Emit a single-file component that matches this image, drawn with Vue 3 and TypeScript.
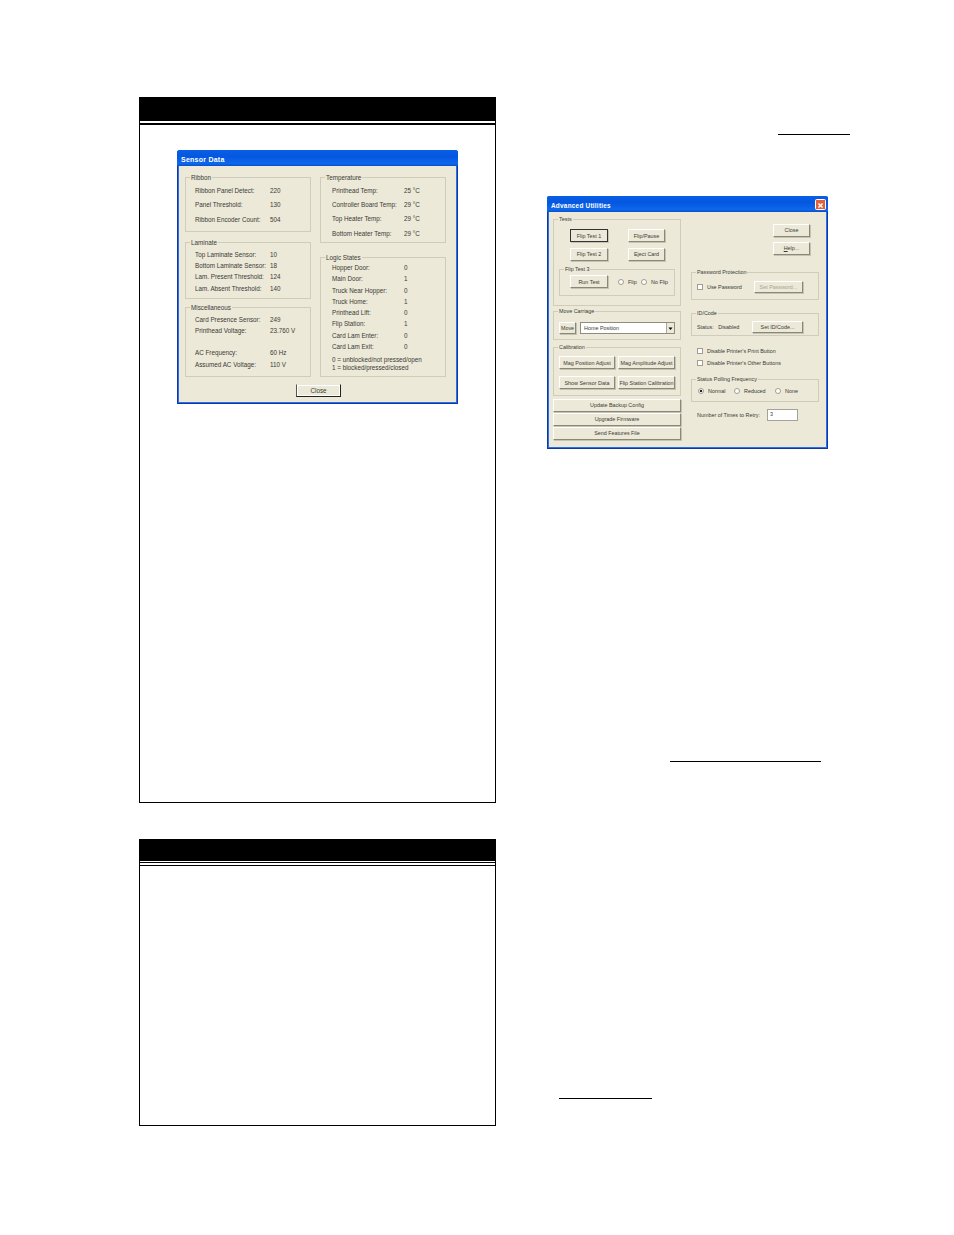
<script setup lang="ts">
interface Row { label: string; value: string }
const ribbon: Row[] = [
  { label: 'Ribbon Panel Detect:', value: '220' },
  { label: 'Panel Threshold:', value: '130' },
  { label: 'Ribbon Encoder Count:', value: '504' },
]
const laminate: Row[] = [
  { label: 'Top Laminate Sensor:', value: '10' },
  { label: 'Bottom Laminate Sensor:', value: '18' },
  { label: 'Lam. Present Threshold:', value: '124' },
  { label: 'Lam. Absent Threshold:', value: '140' },
]
const misc: Row[] = [
  { label: 'Card Presence Sensor:', value: '249' },
  { label: 'Printhead Voltage:', value: '23.760 V' },
  { label: '\u00a0', value: '' },
  { label: 'AC Frequency:', value: '60 Hz' },
  { label: 'Assumed AC Voltage:', value: '110 V' },
]
const temperature: Row[] = [
  { label: 'Printhead Temp:', value: '25 °C' },
  { label: 'Controller Board Temp:', value: '29 °C' },
  { label: 'Top Heater Temp:', value: '29 °C' },
  { label: 'Bottom Heater Temp:', value: '29 °C' },
]
const logic: Row[] = [
  { label: 'Hopper Door:', value: '0' },
  { label: 'Main Door:', value: '1' },
  { label: 'Truck Near Hopper:', value: '0' },
  { label: 'Truck Home:', value: '1' },
  { label: 'Printhead Lift:', value: '0' },
  { label: 'Flip Station:', value: '1' },
  { label: 'Card Lam Enter:', value: '0' },
  { label: 'Card Lam Exit:', value: '0' },
]
</script>

<template>
  <div class="page">
    <div class="left">
      <section class="panel panel-one">
        <div class="band"></div>
        <div class="rule"></div>
        <div class="dialog sensor">
          <div class="title">Sensor Data</div>
          <div class="sensor-body">
            <div class="col">
              <fieldset class="g g-ribbon">
                <legend>Ribbon</legend>
                <div v-for="r in ribbon" :key="r.label" class="row"><span>{{ r.label }}</span><span>{{ r.value }}</span></div>
              </fieldset>
              <fieldset class="g g-laminate">
                <legend>Laminate</legend>
                <div v-for="r in laminate" :key="r.label" class="row"><span>{{ r.label }}</span><span>{{ r.value }}</span></div>
              </fieldset>
              <fieldset class="g g-misc">
                <legend>Miscellaneous</legend>
                <div v-for="r in misc" :key="r.label" class="row"><span>{{ r.label }}</span><span>{{ r.value }}</span></div>
              </fieldset>
            </div>
            <div class="col">
              <fieldset class="g g-temp">
                <legend>Temperature</legend>
                <div v-for="r in temperature" :key="r.label" class="row"><span>{{ r.label }}</span><span>{{ r.value }}</span></div>
              </fieldset>
              <fieldset class="g g-logic">
                <legend>Logic States</legend>
                <div v-for="r in logic" :key="r.label" class="row"><span>{{ r.label }}</span><span>{{ r.value }}</span></div>
                <p class="note">0 = unblocked/not pressed/open<br />1 = blocked/pressed/closed</p>
              </fieldset>
            </div>
          </div>
          <div class="close-row"><button class="btn sensor-close">Close</button></div>
        </div>
      </section>
      <section class="panel panel-two">
        <div class="band band-two"></div>
        <div class="rule rule-two"></div>
        <div class="rule rule-two-b"></div>
      </section>
    </div>

    <div class="right">
      <div class="link-line line-a"></div>
      <div class="dialog advanced">
        <div class="title title-adv">
          <span>Advanced Utilities</span>
          <span class="x">
            <svg viewBox="0 0 11 11" width="11" height="11"><path d="M3 3l5 5M8 3l-5 5" stroke="#fff" stroke-width="1.8" fill="none" /></svg>
          </span>
        </div>
        <div class="adv-body">
          <div class="adv-col">
            <fieldset class="g a-tests">
              <legend>Tests</legend>
              <div class="btn-row"><button class="btn b38 focus">Flip Test 1</button><button class="btn b37">Flip/Pause</button></div>
              <div class="btn-row"><button class="btn b38">Flip Test 2</button><button class="btn b37">Eject Card</button></div>
              <fieldset class="g a-flip3">
                <legend>Flip Test 3</legend>
                <div class="flip-row">
                  <button class="btn b38">Run Test</button>
                  <label class="opt o-flip"><i class="radio"></i>Flip</label>
                  <label class="opt"><i class="radio"></i>No Flip</label>
                </div>
              </fieldset>
            </fieldset>
            <fieldset class="g a-move">
              <legend>Move Carriage</legend>
              <div class="move-row">
                <button class="btn b-move">Move</button>
                <div class="combo">
                  <span>Home Position</span>
                  <i class="arrow"><svg viewBox="0 0 7 7" width="7" height="7"><path d="M1.5 2.5h4L3.5 5z" fill="#000" /></svg></i>
                </div>
              </div>
            </fieldset>
            <fieldset class="g a-cal">
              <legend>Calibration</legend>
              <div class="cal-grid">
                <button class="btn">Mag Position Adjust</button>
                <button class="btn">Mag Amplitude Adjust</button>
                <button class="btn">Show Sensor Data</button>
                <button class="btn">Flip Station Calibration</button>
              </div>
            </fieldset>
            <div class="wide-stack">
              <button class="btn wide">Update Backup Config</button>
              <button class="btn wide">Upgrade Firmware</button>
              <button class="btn wide">Send Features File</button>
            </div>
          </div>
          <div class="adv-col adv-right">
            <div class="top-btns">
              <button class="btn b37">Close</button>
              <button class="btn b37"><u>H</u>elp...</button>
            </div>
            <fieldset class="g a-pass">
              <legend>Password Protection</legend>
              <div class="pass-row">
                <label class="opt"><i class="check"></i>Use Password</label>
                <button class="btn b-set disabled">Set Password...</button>
              </div>
            </fieldset>
            <fieldset class="g a-id">
              <legend>ID/Code</legend>
              <div class="id-row">
                <span>Status:&nbsp;&nbsp; Disabled</span>
                <button class="btn b-id">Set ID/Code...</button>
              </div>
            </fieldset>
            <div class="checks">
              <label class="opt"><i class="check"></i>Disable Printer's Print Button</label>
              <label class="opt"><i class="check"></i>Disable Printer's Other Buttons</label>
            </div>
            <fieldset class="g a-poll">
              <legend>Status Polling Frequency</legend>
              <div class="poll-row">
                <label class="opt p-normal"><i class="radio on"></i>Normal</label>
                <label class="opt p-reduced"><i class="radio"></i>Reduced</label>
                <label class="opt"><i class="radio"></i>None</label>
              </div>
            </fieldset>
            <div class="retry">
              <span>Number of Times to Retry:</span>
              <div class="retry-input">3</div>
            </div>
          </div>
        </div>
      </div>
      <div class="link-line line-b"></div>
      <div class="link-line line-c"></div>
    </div>
  </div>
</template>

<style>
html, body { margin: 0; background: #fff; }
</style>

<style scoped>
.page {
  width: 954px;
  height: 1235px;
  display: flex;
  overflow: hidden;
  background: #fff;
  font-family: "Liberation Sans", Arial, sans-serif;
  font-size: 6.3px;
  line-height: 8px;
  color: #3a3a36;
}
.left { margin-left: 139px; padding-top: 97px; width: 357px; }
.panel { box-sizing: border-box; border: 1px solid #000; border-top: 0; }
.panel-one { height: 706px; }
.panel-two { height: 287px; margin-top: 36px; }
.band { height: 24px; background: #000; margin: 0 -1px; }
.band-two { height: 22px; }
.rule { height: 2px; background: #000; margin: 2px -1px 0; }
.rule-two { height: 1px; margin-top: 1px; }
.rule-two-b { height: 1px; margin: 2px -1px 0; background: #000; }

.dialog {
  box-sizing: border-box;
  width: 281px;
  background: #ece9d8;
  border: 1px solid #0b38a8;
  border-top: 0;
  border-radius: 3px 3px 0 0;
  box-shadow: inset 0 0 0 1px #2f6fe4;
}
.sensor { height: 254px; margin: 25px 0 0 37px; }
.title {
  box-sizing: border-box;
  height: 16px;
  margin: 0 -1px;
  padding: 3px 3px 0 4px;
  display: flex;
  align-items: center;
  justify-content: space-between;
  color: #fff;
  font-size: 7px;
  font-weight: 700;
  letter-spacing: 0.25px;
  border-radius: 3px 3px 0 0;
  background: linear-gradient(180deg, #0a5fe6 0%, #0457e0 40%, #0d68ec 85%, #0a4fc8 100%);
}
.sensor-body { display: flex; gap: 9.5px; padding: 7px 0 0 7px; }
.col { display: flex; flex-direction: column; width: 125.5px; }

.g {
  --pad: 0px;
  box-sizing: border-box;
  margin: 0;
  padding: 0 0 0 var(--pad);
  min-width: 0;
  border: 1px solid #cfccba;
}
.g legend {
  margin-left: calc(4px - var(--pad));
  padding: 0 1px;
  line-height: 9px;
}
.row { display: grid; grid-template-columns: 75px 1fr; white-space: nowrap; }

.g-ribbon { --pad: 9px; height: 59px; padding-top: 2px; }
.g-ribbon .row { height: 14.4px; line-height: 14.4px; }
.g-laminate { --pad: 9px; height: 61px; margin-top: 6px; padding-top: 2px; }
.g-laminate .row { height: 11.2px; line-height: 11.2px; }
.g-misc { --pad: 9px; height: 74px; margin-top: 4px; padding-top: 1.5px; }
.g-misc .row { height: 11.3px; line-height: 11.3px; }
.g-temp { --pad: 11px; height: 70px; padding-top: 2px; }
.g-temp .row { grid-template-columns: 72px 1fr; height: 14.2px; line-height: 14.2px; }
.g-logic { --pad: 11px; height: 124px; margin-top: 10px; }
.g-logic .row { grid-template-columns: 72px 1fr; height: 11.3px; line-height: 11.3px; }
.note { margin: 4px 0 0; line-height: 8px; white-space: nowrap; }

.close-row { display: flex; justify-content: center; margin-top: 7px; padding-left: 2px; }
.btn {
  box-sizing: border-box;
  display: block;
  margin: 0;
  padding: 0;
  font: inherit;
  color: inherit;
  text-align: center;
  white-space: nowrap;
  background: #ece9d8;
  border: 1px solid;
  border-color: #fff #8a8878 #8a8878 #fff;
  box-shadow: 1px 1px 0 #c6c3b2;
}
.sensor-close {
  width: 45px;
  height: 13px;
  border-color: #e8e8e0 #222 #222 #555;
  box-shadow: inset 0 0 0 1px #fff;
}

.right { display: flex; flex-direction: column; padding: 134px 0 0 51px; }
.link-line { height: 1px; background: #000; }
.line-a { width: 72px; margin-left: 231px; }
.line-b { width: 151px; margin: 312px 0 0 123px; }
.line-c { width: 93px; margin: 336px 0 0 12px; }

.advanced { height: 253px; margin-top: 61px; border-radius: 2px 2px 0 0; font-size: 5.4px; }
.title-adv { padding-right: 2px; font-size: 6.4px; }
.x {
  flex: none;
  width: 11px;
  height: 11px;
  margin-top: -3px;
  display: flex;
  border: 0.5px solid #fff;
  border-radius: 1.5px;
  background: #e2603a;
  box-sizing: border-box;
}
.adv-body { display: flex; gap: 10px; padding: 3px 0 0 5px; }
.adv-col { display: flex; flex-direction: column; width: 128px; flex: none; }

.a-tests { --pad: 16px; height: 91px; padding-top: 5px; }
.btn-row { display: flex; gap: 20px; height: 13px; margin-bottom: 5.5px; }
.b38 { width: 38px; height: 13px; }
.b37 { width: 37px; height: 13px; }
.focus { border: 1.5px solid #333; }
.a-flip3 { --pad: 10px; width: 116px; height: 31px; margin: -1px 0 0 -11px; padding-top: 1px; }
.flip-row { display: flex; align-items: center; height: 13px; }
.opt { display: flex; align-items: center; white-space: nowrap; }
.o-flip { margin: 0 5px 0 10px; width: 18px; }
.radio, .check {
  flex: none;
  box-sizing: border-box;
  width: 6px;
  height: 6px;
  margin-right: 4px;
  background: #fff;
  border: 1px solid #a09e90;
}
.radio { border-radius: 50%; }
.radio.on { background: radial-gradient(circle, #222 0 1.3px, #fff 1.6px); }

.a-move { --pad: 5px; height: 33px; margin-top: 1px; padding-top: 6px; }
.move-row { display: flex; gap: 4px; height: 12px; }
.b-move { width: 17px; height: 12px; }
.combo {
  box-sizing: border-box;
  width: 95px;
  height: 12px;
  display: flex;
  align-items: center;
  justify-content: space-between;
  padding: 0 0 0 3px;
  background: #fff;
  border: 1px solid #8e8c7e;
}
.arrow {
  display: flex;
  width: 8px;
  height: 10px;
  align-items: center;
  justify-content: center;
  background: #ece9d8;
  border-left: 1px solid #aca899;
  box-sizing: border-box;
}
.a-cal { --pad: 5px; height: 53px; margin-top: 3px; padding-top: 4px; }
.cal-grid { display: grid; grid-template-columns: 56px 57px; gap: 7px 3px; grid-auto-rows: 13px; }
.wide-stack { display: flex; flex-direction: column; gap: 1.5px; margin-top: 3px; }
.wide { width: 128px; height: 12.5px; }

.adv-right { padding-top: 9px; }
.top-btns { display: flex; flex-direction: column; gap: 5.5px; align-items: flex-end; padding-right: 9px; }
.top-btns .btn { height: 12.5px; }
.a-pass { --pad: 5px; height: 32px; margin-top: 13px; padding-top: 4px; }
.pass-row { display: flex; align-items: center; justify-content: space-between; height: 13px; padding-right: 15px; }
.b-set { width: 49px; height: 12.5px; }
.disabled { color: #a6a494; }
.a-id { --pad: 5px; height: 27px; margin-top: 9px; padding-top: 3px; }
.id-row { display: flex; align-items: center; justify-content: space-between; height: 13px; padding-right: 15px; }
.b-id { width: 51px; height: 12.5px; }
.checks { display: flex; flex-direction: column; gap: 4px; margin-top: 11px; padding-left: 6px; }
.a-poll { --pad: 6px; height: 27px; margin-top: 8px; padding-top: 1px; }
.poll-row { display: flex; align-items: center; height: 12px; }
.p-normal { width: 36px; }
.p-reduced { width: 41px; }
.retry { display: flex; align-items: center; height: 12px; margin-top: 7px; padding-left: 6px; }
.retry span { width: 70px; white-space: nowrap; }
.retry-input {
  box-sizing: border-box;
  width: 31px;
  height: 12px;
  padding-left: 2px;
  background: #fff;
  border: 1px solid #a5a395;
}
</style>
